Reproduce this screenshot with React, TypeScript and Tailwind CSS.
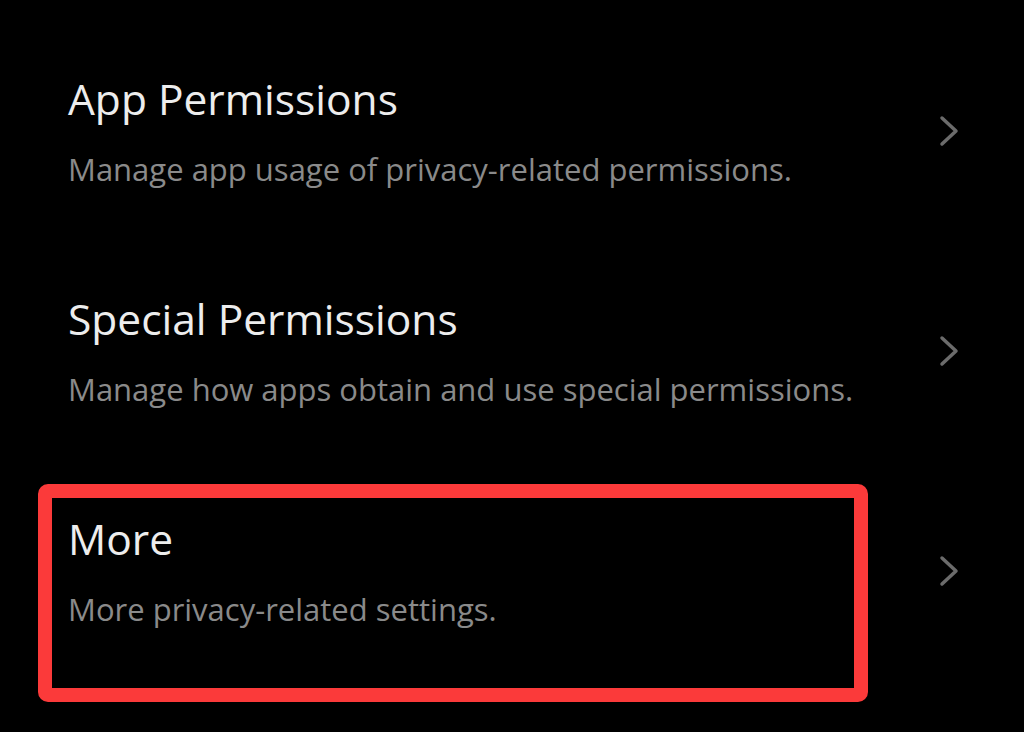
const rows = [
  { title: "App Permissions", subtitle: "Manage app usage of privacy-related permissions." },
  { title: "Special Permissions", subtitle: "Manage how apps obtain and use special permissions." },
  { title: "More", subtitle: "More privacy-related settings.", marked: true },
]

function Chevron() {
  return (
    <svg width="20" height="32" viewBox="0 0 20 32" fill="none" className="shrink-0">
      <polyline
        points="3,3 17,16 3,29"
        stroke="#6b6b6b"
        strokeWidth="3.5"
        strokeLinecap="round"
        strokeLinejoin="round"
      />
    </svg>
  )
}

export default function App() {
  return (
    <div className="h-[732px] w-full overflow-hidden bg-black pt-[21px] font-['Open_Sans',sans-serif]">
      {rows.map((row) => (
        <div key={row.title} className="relative flex h-[220px] items-center justify-between pl-[68px] pr-[65px]">
          <div className="flex flex-col">
            <div className="text-[42.5px] leading-[50px] text-[#ededed]">{row.title}</div>
            <div className="mt-[25px] text-[31px] leading-[40px] text-[#8a8a8a]">{row.subtitle}</div>
          </div>
          <Chevron />
          {row.marked && (
            <div className="absolute left-[38px] top-[23px] h-[218px] w-[830px] rounded-[10px] border-[14px] border-[#fb3a3a]" />
          )}
        </div>
      ))}
    </div>
  )
}
